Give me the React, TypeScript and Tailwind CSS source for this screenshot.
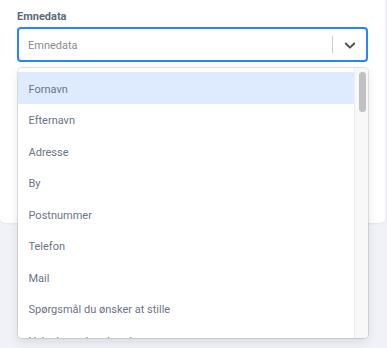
import React from "react";

const options = [
  "Fornavn",
  "Efternavn",
  "Adresse",
  "By",
  "Postnummer",
  "Telefon",
  "Mail",
  "Spørgsmål du ønsker at stille",
  "Hvis du ønsker dropdown",
];

export default function App() {
  return (
    <div
      className="w-[387px] h-[348px] bg-[#f0f2f7] overflow-hidden relative"
      style={{ fontFamily: "Roboto, 'Liberation Sans', sans-serif" }}
    >
      <div className="w-[385px] h-[223px] bg-white rounded-b-[5px] shadow-[0_1px_2px_rgba(0,0,0,0.05)] px-[17px] pt-[9px]">
        <div className="text-[11px] leading-[16px] font-bold text-[#5d697c]">Emnedata</div>
        <div className="mt-[2px] h-[35px] rounded-[4px] border-2 border-[#2684ff] flex items-center">
          <div className="flex-1 pl-[9px] pt-[3px] text-[11px] text-[#8c8c8c]">Emnedata</div>
          <div className="w-px h-[17px] bg-[#cccccc]" />
          <div className="w-[33px] flex items-center justify-center">
            <svg width="18" height="18" viewBox="0 0 20 20" fill="#555">
              <path d="M4.516 7.548c0.436-0.446 1.043-0.481 1.576 0l3.908 3.747 3.908-3.747c0.533-0.481 1.141-0.446 1.574 0 0.436 0.445 0.408 1.197 0 1.615-0.406 0.418-4.695 4.502-4.695 4.502-0.217 0.223-0.502 0.335-0.787 0.335s-0.57-0.112-0.789-0.335c0 0-4.287-4.084-4.695-4.502s-0.436-1.17 0-1.615z" />
            </svg>
          </div>
        </div>
      </div>
      <div className="absolute left-[17.5px] top-[68px] w-[350px] h-[270px] bg-white rounded-[4px] shadow-[0_0_0_1px_rgba(0,0,0,0.1),0_4px_11px_rgba(0,0,0,0.1)] overflow-hidden flex">
        <div className="flex-1 pt-[4px] overflow-hidden">
          {options.map((o, i) => (
            <div
              key={o}
              className={`h-[31.5px] flex items-center pl-[11px] pt-[4px] text-[11px] text-[#6b7488] whitespace-nowrap ${
                i === 0 ? "bg-[#deebff]" : ""
              }`}
            >
              {o}
            </div>
          ))}
        </div>
        <div className="w-[14px] border-l border-[#ebebeb] bg-[#f8f8f8] pt-[4px] pl-[4px]">
          <div className="w-[7px] h-[40px] rounded-full bg-[#c1c1c1]" />
        </div>
      </div>
    </div>
  );
}
